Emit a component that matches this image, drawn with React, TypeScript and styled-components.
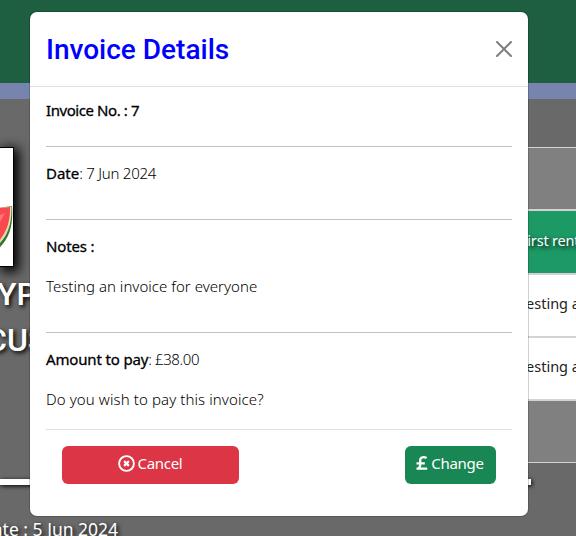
import React from "react";
import styled, { createGlobalStyle } from "styled-components";

const GlobalStyle = createGlobalStyle`
  *, *::before, *::after { box-sizing: border-box; }
  body {
    margin: 0;
    overflow: hidden;
    background: #696969;
    font-family: "Noto Sans", "Open Sans", sans-serif;
    font-size: 15px;
    font-weight: 300;
    color: #000;
  }
  p, h1, h2 { margin: 0; }
`;

const Page = styled.div`
  position: relative;
  width: 576px;
  height: 536px;
  overflow: hidden;
  display: flex;
  flex-direction: column;
  background: #696969;
`;

const SiteHeader = styled.header`
  flex: none;
  height: 99px;
  background: #1e5f41;
  border-bottom: 16px solid #7784ad;
`;

const Columns = styled.main`
  display: grid;
  grid-template-columns: 510px 66px;
  height: 364px;
`;

const Account = styled.section`
  padding-top: 48px;
`;

const Picture = styled.div`
  width: 14px;
  height: 120px;
  background: #fff;
  border: solid #000;
  border-width: 1px 1px 1px 0;
  box-shadow: 3px 3px 12px 2px #000;

  svg { display: block; }
`;

const AccountName = styled.h2<{ $shift: number }>`
  margin-left: ${({ $shift }) => $shift}px;
  font: 500 32px/46px Roboto, sans-serif;
  color: #fff;
  text-shadow: 2px 2px 4px #000;
  white-space: nowrap;
`;

const Names = styled.div`
  padding-top: 4px;
`;

const InvoiceList = styled.section`
  padding-top: 48px;
`;

const ListBand = styled.div<{ $edge: "top" | "bottom" }>`
  height: 62px;
  background: #808080;
  border-${({ $edge }) => $edge}: 1px solid #d3d3d3;
`;

const ListRow = styled.div<{ $active?: boolean }>`
  height: ${({ $active }) => ($active ? 64 : 63)}px;
  padding-left: ${({ $active }) => ($active ? 10 : 9)}px;
  white-space: nowrap;
  border-top: 2px solid #d3d3d3;
  background: ${({ $active }) => ($active ? "#1d9965" : "#fff")};
  color: ${({ $active }) => ($active ? "#fff" : "#222")};
  text-shadow: ${({ $active }) => ($active ? "2px 2px 4px #000" : "none")};
  font-weight: 400;
  font-size: 14.5px;
  letter-spacing: ${({ $active }) => ($active ? -0.2 : 0)}px;
  line-height: ${({ $active }) => ($active ? 59 : 57)}px;
`;

const ListEnd = styled.div`
  height: 2px;
  background: #d3d3d3;
`;

const Rule = styled.div`
  flex: none;
  width: 531px;
  height: 6px;
  margin-top: 16px;
  background: #fff;
  box-shadow: 1px 1px 4px #000;
`;

const PageDate = styled.p`
  margin: 31px 0 0 -20px;
  font-size: 17.5px;
  font-weight: 400;
  line-height: 26px;
  color: #fff;
  text-shadow: 2px 2px 4px #000;
`;

const Dialog = styled.div`
  position: absolute;
  top: 12px;
  left: 30px;
  width: 498px;
  height: 504px;
  background: #fff;
  border-radius: 7px;
  box-shadow: 0 0 0 1px rgba(0, 0, 0, 0.18);
`;

const DialogHeader = styled.header`
  display: flex;
  align-items: center;
  justify-content: space-between;
  height: 75px;
  padding: 0 16px;
  border-bottom: 1px solid #dee2e6;
`;

const Title = styled.h1`
  padding-top: 2px;
  font: 500 28px/34px Roboto, sans-serif;
  color: #0000ff;
`;

const CloseButton = styled.button`
  display: flex;
  padding: 0;
  border: 0;
  background: none;
  color: #7f7f7f;
`;

const DialogBody = styled.div`
  padding: 0 16px;
`;

const Section = styled.section<{ $height: number; $first?: boolean; $light?: boolean }>`
  height: ${({ $height }) => $height}px;
  padding-top: ${({ $first }) => ($first ? 11 : 14)}px;
  border-bottom: 1px solid ${({ $light }) => ($light ? "#dee0e1" : "#c2c2c2")};
`;

const Line = styled.p<{ $tracking?: number; $gap?: number }>`
  margin-top: ${({ $gap = 0 }) => $gap}px;
  line-height: 24px;
  letter-spacing: ${({ $tracking = 0 }) => $tracking}px;
  white-space: pre;
`;

const Label = styled.span<{ $tracking?: number }>`
  font-weight: 400;
  -webkit-text-stroke: 0.3px currentColor;
  letter-spacing: ${({ $tracking = 0 }) => $tracking}px;
`;

const Actions = styled.div`
  display: flex;
  justify-content: space-between;
  padding: 16px;
`;

const ActionButton = styled.button<{ $color: string; $width: number }>`
  display: flex;
  align-items: center;
  justify-content: center;
  gap: 3px;
  width: ${({ $width }) => $width}px;
  height: 38px;
  padding: 0 1px 4px 0;
  border: 0;
  border-radius: 6px;
  background: ${({ $color }) => $color};
  color: #fff;
  font: 400 15px/24px "Noto Sans", sans-serif;
  letter-spacing: -0.3px;
`;

const Melon = () => (
  <svg width="13" height="118" viewBox="0 0 13 118">
    <path d="M-10 61L12 58C13.5 78 9 92-3 102H-10Z" fill="#3d7330" />
    <path d="M-10 61L11.5 58.5C12 77 7 89-3 98H-10Z" fill="#dce3b0" />
    <path d="M-10 61L10 59C10.5 76 5 87-3 95H-10Z" fill="#fa484f" />
    <path d="M0 67l5-2-5 9z" fill="#ff777b" />
  </svg>
);

const CloseIcon = () => (
  <svg width="16" height="16" viewBox="0 0 16 16" fill="currentColor">
    <path d="M.293.293a1 1 0 0 1 1.414 0L8 6.586 14.293.293a1 1 0 1 1 1.414 1.414L9.414 8l6.293 6.293a1 1 0 0 1-1.414 1.414L8 9.414l-6.293 6.293a1 1 0 0 1-1.414-1.414L6.586 8 .293 1.707a1 1 0 0 1 0-1.414z" />
  </svg>
);

const CancelIcon = () => (
  <svg width="17" height="17" viewBox="0 0 17 17" fill="none" stroke="currentColor">
    <circle cx="8.5" cy="8.5" r="7.4" strokeWidth="1.9" />
    <path d="M6.1 6.1l4.8 4.8M10.9 6.1l-4.8 4.8" strokeWidth="2.2" />
  </svg>
);

const PoundIcon = () => (
  <svg width="12" height="14" viewBox="0 0 12 14" fill="none" stroke="currentColor" strokeWidth="2.3">
    <path d="M10.6 2C8 .6 4.2.9 4.2 4.2V8.5C4.2 10.5 3.6 11.8 2 12.7M.5 7.3H8.8M.5 12.7H11.2" />
  </svg>
);

export default function App() {
  return (
    <>
      <GlobalStyle />
      <Page>
        <SiteHeader />
        <Columns>
          <Account>
            <Picture>
              <Melon />
            </Picture>
            <Names>
              <AccountName $shift={-3}>YP</AccountName>
              <AccountName $shift={-14}>CUS</AccountName>
            </Names>
          </Account>
          <InvoiceList>
            <ListBand $edge="top" />
            <ListRow $active>First rent</ListRow>
            <ListRow>Testing a</ListRow>
            <ListRow>Testing a</ListRow>
            <ListEnd />
            <ListBand $edge="bottom" />
          </InvoiceList>
        </Columns>
        <Rule />
        <PageDate>Date : 5 Jun 2024</PageDate>
        <Dialog role="dialog">
          <DialogHeader>
            <Title>Invoice Details</Title>
            <CloseButton aria-label="Close">
              <CloseIcon />
            </CloseButton>
          </DialogHeader>
          <DialogBody>
            <Section $height={60} $first>
              <Line>
                <Label $tracking={-0.42}>Invoice No. : 7</Label>
              </Line>
            </Section>
            <Section $height={73}>
              <Line $tracking={-0.25}>
                <Label>Date</Label>: 7 Jun 2024
              </Line>
            </Section>
            <Section $height={113}>
              <Line>
                <Label $tracking={-0.15}>Notes :</Label>
              </Line>
              <Line $gap={16} $tracking={0.03}>Testing an invoice for everyone</Line>
            </Section>
            <Section $height={97} $light>
              <Line $tracking={-0.4}>
                <Label $tracking={-0.15}>Amount to pay</Label>: £38.00
              </Line>
              <Line $gap={16} $tracking={0.1}>Do you wish to pay this invoice?</Line>
            </Section>
            <Actions>
              <ActionButton $color="#dc3545" $width={177}>
                <CancelIcon />
                <span>Cancel</span>
              </ActionButton>
              <ActionButton $color="#198754" $width={91}>
                <PoundIcon />
                <span>Change</span>
              </ActionButton>
            </Actions>
          </DialogBody>
        </Dialog>
      </Page>
    </>
  );
}
